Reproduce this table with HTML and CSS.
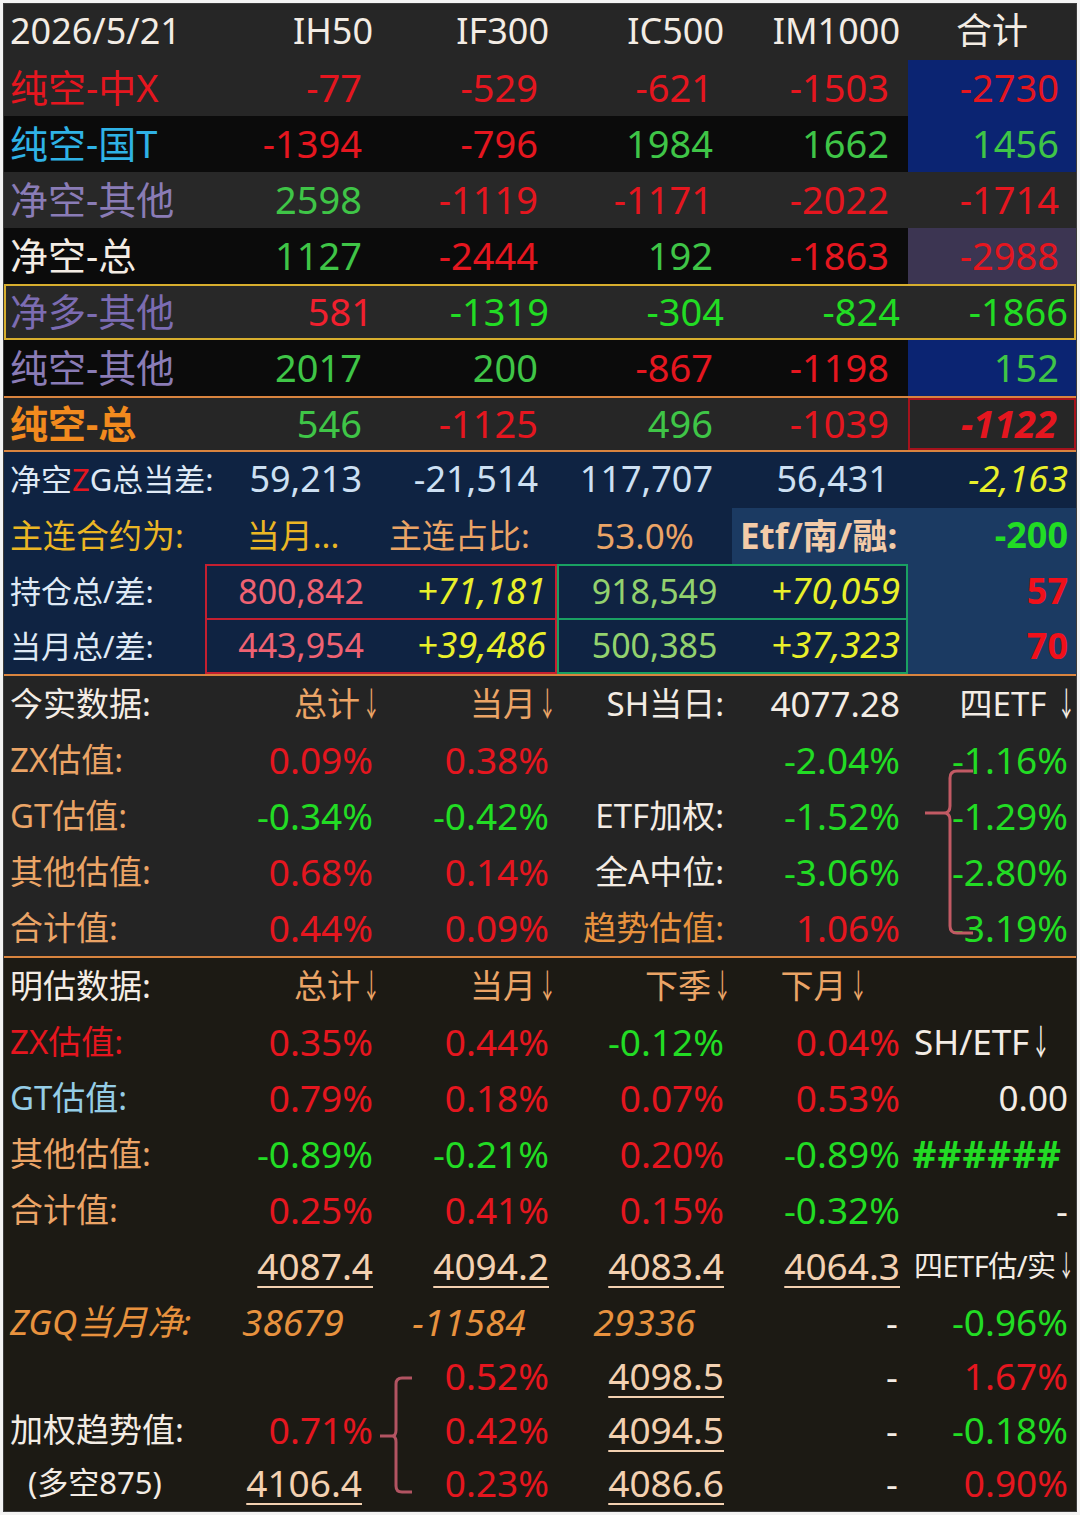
FILE: index.html
```html
<!DOCTYPE html>
<html lang="zh-CN">
<head>
<meta charset="utf-8">
<title>期货持仓数据</title>
<link rel="stylesheet" href="styles.css">
</head>
<body>
<div class="frame">
  <section class="s1">
    <div class="row hdr bg-g">
      <div class="c lab wh">2026/5/21</div>
      <div class="c hd wh">IH50</div>
      <div class="c hd wh">IF300</div>
      <div class="c hd wh">IC500</div>
      <div class="c hd wh">IM1000</div>
      <div class="c ctr wh">合计</div>
    </div>
    <div class="row bg-g">
      <div class="c lab red">纯空-中X</div>
      <div class="c n red">-77</div>
      <div class="c n red">-529</div>
      <div class="c n red">-621</div>
      <div class="c n red">-1503</div>
      <div class="c n tot bg-blue red">-2730</div>
    </div>
    <div class="row bg-k">
      <div class="c lab cyan">纯空-国T</div>
      <div class="c n red">-1394</div>
      <div class="c n red">-796</div>
      <div class="c n grn">1984</div>
      <div class="c n grn">1662</div>
      <div class="c n tot bg-blue grn">1456</div>
    </div>
    <div class="row bg-g2">
      <div class="c lab pur">净空-其他</div>
      <div class="c n grn">2598</div>
      <div class="c n red">-1119</div>
      <div class="c n red">-1171</div>
      <div class="c n red">-2022</div>
      <div class="c n tot red">-1714</div>
    </div>
    <div class="row bg-k">
      <div class="c lab wh">净空-总</div>
      <div class="c n grn">1127</div>
      <div class="c n red">-2444</div>
      <div class="c n grn">192</div>
      <div class="c n red">-1863</div>
      <div class="c n tot bg-violet red">-2988</div>
    </div>
    <div class="row bg-g2 ybox">
      <div class="c lab pur2">净多-其他</div>
      <div class="c red2">581</div>
      <div class="c bgrn">-1319</div>
      <div class="c bgrn">-304</div>
      <div class="c bgrn">-824</div>
      <div class="c bgrn">-1866</div>
    </div>
    <div class="row bg-k">
      <div class="c lab pur">纯空-其他</div>
      <div class="c n grn">2017</div>
      <div class="c n grn">200</div>
      <div class="c n red">-867</div>
      <div class="c n red">-1198</div>
      <div class="c n tot bg-blue grn">152</div>
    </div>
    <div class="row bg-g obox">
      <div class="c lab org bold">纯空-总</div>
      <div class="c n grn">546</div>
      <div class="c n red">-1125</div>
      <div class="c n grn">496</div>
      <div class="c n red">-1039</div>
      <div class="c n tot rbox red bold it">-1122</div>
    </div>
  </section>

  <section class="s2">
    <div class="row">
      <div class="c lab lt nl">净空<span class="red">Z</span>G总当差:</div>
      <div class="c n lb">59,213</div>
      <div class="c n lb">-21,514</div>
      <div class="c n lb">117,707</div>
      <div class="c n lb">56,431</div>
      <div class="c yel it">-2,163</div>
    </div>
    <div class="row">
      <div class="c lab gold cj">主连合约为:</div>
      <div class="c ctr gold cj">当月...</div>
      <div class="c left tan cj">主连占比:</div>
      <div class="c ctr tan pct">53.0%</div>
      <div class="c left peach bold bg-nl etf">Etf/南/融:</div>
      <div class="c bgrn bold bg-nl">-200</div>
    </div>
    <div class="row">
      <div class="c lab lt nl">持仓总/差:</div>
      <div class="box bx-red">
        <div class="c pink sm">800,842</div>
        <div class="c yel it">+71,181</div>
      </div>
      <div class="box bx-grn">
        <div class="c lgrn sm">918,549</div>
        <div class="c yel it">+70,059</div>
      </div>
      <div class="c bred bold bg-nl">57</div>
    </div>
    <div class="row">
      <div class="c lab lt nl">当月总/差:</div>
      <div class="box bx-red notop">
        <div class="c pink sm">443,954</div>
        <div class="c yel it">+39,486</div>
      </div>
      <div class="box bx-grn notop">
        <div class="c lgrn sm">500,385</div>
        <div class="c yel it">+37,323</div>
      </div>
      <div class="c bred bold bg-nl">70</div>
    </div>
  </section>

  <section class="s3">
    <div class="row">
      <div class="c lab wh cj">今实数据:</div>
      <div class="c tan cj">总计<span class="ar">↓</span></div>
      <div class="c tan cj">当月<span class="ar">↓</span></div>
      <div class="c wh cj">SH当日:</div>
      <div class="c wh sm">4077.28</div>
      <div class="c wh cj">四ETF&nbsp;<span class="ar">↓</span></div>
    </div>
    <div class="row">
      <div class="c lab tan cj">ZX估值:</div>
      <div class="c red">0.09%</div>
      <div class="c red">0.38%</div>
      <div class="c"></div>
      <div class="c bgrn">-2.04%</div>
      <div class="c bgrn">-1.16%</div>
    </div>
    <div class="row">
      <div class="c lab tan cj">GT估值:</div>
      <div class="c bgrn">-0.34%</div>
      <div class="c bgrn">-0.42%</div>
      <div class="c wh cj">ETF加权:</div>
      <div class="c bgrn">-1.52%</div>
      <div class="c bgrn">-1.29%</div>
    </div>
    <div class="row">
      <div class="c lab tan cj">其他估值:</div>
      <div class="c red">0.68%</div>
      <div class="c red">0.14%</div>
      <div class="c wh cj">全A中位:</div>
      <div class="c bgrn">-3.06%</div>
      <div class="c bgrn">-2.80%</div>
    </div>
    <div class="row">
      <div class="c lab tan cj">合计值:</div>
      <div class="c red">0.44%</div>
      <div class="c red">0.09%</div>
      <div class="c org2 cj">趋势估值:</div>
      <div class="c red">1.06%</div>
      <div class="c bgrn">-3.19%</div>
    </div>
    <svg class="brace brace-a" width="60" height="180" viewBox="0 0 60 180">
      <path d="M4 47 H23 Q29 47 29 40 V12 Q29 5 36 5 H52 M23 47 Q29 47 29 54 V160 Q29 167 36 167 H52" fill="none" stroke="#c25a64" stroke-width="3"/>
    </svg>
  </section>

  <section class="s4">
    <div class="row">
      <div class="c lab wh cj">明估数据:</div>
      <div class="c tan cj">总计<span class="ar">↓</span></div>
      <div class="c tan cj">当月<span class="ar">↓</span></div>
      <div class="c tan cj">下季<span class="ar">↓</span></div>
      <div class="c ctr tan cj">下月<span class="ar">↓</span></div>
      <div class="c"></div>
    </div>
    <div class="row">
      <div class="c lab red cj">ZX估值:</div>
      <div class="c red">0.35%</div>
      <div class="c red">0.44%</div>
      <div class="c bgrn">-0.12%</div>
      <div class="c red">0.04%</div>
      <div class="c left wh shetf">SH/ETF<span class="ar">↓</span></div>
    </div>
    <div class="row">
      <div class="c lab sky cj">GT估值:</div>
      <div class="c red">0.79%</div>
      <div class="c red">0.18%</div>
      <div class="c red">0.07%</div>
      <div class="c red">0.53%</div>
      <div class="c wh sm">0.00</div>
    </div>
    <div class="row">
      <div class="c lab tan cj">其他估值:</div>
      <div class="c bgrn">-0.89%</div>
      <div class="c bgrn">-0.21%</div>
      <div class="c red">0.20%</div>
      <div class="c bgrn">-0.89%</div>
      <div class="c bgrn bold hash">######</div>
    </div>
    <div class="row">
      <div class="c lab tan cj">合计值:</div>
      <div class="c red">0.25%</div>
      <div class="c red">0.41%</div>
      <div class="c red">0.15%</div>
      <div class="c bgrn">-0.32%</div>
      <div class="c wh">-</div>
    </div>
    <div class="row">
      <div class="c lab"></div>
      <div class="c u">4087.4</div>
      <div class="c u">4094.2</div>
      <div class="c u">4083.4</div>
      <div class="c u">4064.3</div>
      <div class="c left wh small">四ETF估/实<span class="ar">↓</span></div>
    </div>
    <div class="row">
      <div class="c lab org2 it zgq">ZGQ当月净:</div>
      <div class="c ctr org2 it">38679</div>
      <div class="c ctr org2 it">-11584</div>
      <div class="c ctr org2 it">29336</div>
      <div class="c wh dash">-</div>
      <div class="c bgrn">-0.96%</div>
    </div>
    <div class="row sh">
      <div class="c lab"></div>
      <div class="c"></div>
      <div class="c red">0.52%</div>
      <div class="c u">4098.5</div>
      <div class="c wh dash">-</div>
      <div class="c red">1.67%</div>
    </div>
    <div class="row sh">
      <div class="c lab wh cj">加权趋势值:</div>
      <div class="c red">0.71%</div>
      <div class="c red">0.42%</div>
      <div class="c u">4094.5</div>
      <div class="c wh dash">-</div>
      <div class="c bgrn">-0.18%</div>
    </div>
    <div class="row sh">
      <div class="c lab wh ind">(多空875)</div>
      <div class="c u wide">4106.4</div>
      <div class="c red">0.23%</div>
      <div class="c u">4086.6</div>
      <div class="c wh dash">-</div>
      <div class="c red">0.90%</div>
    </div>
    <svg class="brace brace-b" width="40" height="130" viewBox="0 0 40 130">
      <path d="M2 62 H14 Q18 62 18 56 V10 Q18 4 24 4 H34 M14 62 Q18 62 18 68 V112 Q18 118 24 118 H34" fill="none" stroke="#b25462" stroke-width="3"/>
    </svg>
  </section>
</div>
</body>
</html>
```

FILE: styles.css
```css
* { box-sizing: border-box; }

body {
  margin: 0;
  background: #f3f3f3;
  font-family: "Noto Sans", "Noto Sans CJK SC", sans-serif;
}

.frame {
  margin: 3px;
  width: 1074px;
  border: 1px solid #3c3c3c;
  background: #1c1a14;
}

.row {
  display: grid;
  grid-template-columns: 201px 176px 176px 175px 176px 168px;
  height: 56px;
  font-size: 38px;
}
.row.hdr { font-size: 36px; }

.c {
  display: flex;
  align-items: center;
  justify-content: flex-end;
  padding-right: 8px;
  padding-bottom: 2px;
  white-space: nowrap;
  line-height: 1;
}

.lab { justify-content: flex-start; padding-left: 6px; padding-right: 0; }
.ctr { justify-content: center; padding-right: 0; }
.left { justify-content: flex-start; padding-left: 8px; padding-right: 0; }
.hd { padding-right: 8px; }
.n { padding-right: 19px; }
.n.tot { padding-right: 17px; }

.bold { font-weight: 700; }
.it { font-style: italic; }

/* colours */
.wh { color: #f3ece4; }
.red { color: #e5161f; }
.red2 { color: #f0202e; }
.bred { color: #f0101a; }
.grn { color: #3fc547; }
.bgrn { color: #22dc24; }
.cyan { color: #2fb2e6; }
.pur { color: #8a7cb6; }
.pur2 { color: #7c6cb2; }
.org { color: #f28a1e; }
.org2 { color: #e8923e; }
.tan { color: #eba466; }
.gold { color: #ebb624; }
.peach { color: #f3cba8; }
.lt { color: #dfe9f5; }
.lb { color: #cde0f3; }
.yel { color: #e9f02a; }
.pink { color: #f06272; }
.lgrn { color: #93d26e; }
.sky { color: #95cde6; }

/* section 1 */
.s1 { background: #262626; }
.bg-g { background: #262626; }
.bg-g2 { background: #282828; }
.bg-k { background: #0b0b0b; }
.bg-blue { background: #0b2472; }
.bg-violet { background: #3c3552; }

.ybox { box-shadow: inset 0 0 0 2px #d7ae2e; }
.ybox .c { padding-right: 8px; }
.ybox .lab { padding-left: 6px; }

.obox {
  border-top: 2px solid #d9843f;
  border-bottom: 2px solid #d9843f;
}
.rbox { border: 2px solid #a5121c; }

/* section 2 */
.s2 { background: #0f2342; }
.s2 .row { font-size: 36px; }
.s2 .nl { font-size: 31px; }
.s2 .sm { font-size: 34px; }
.s2 .pct { font-size: 35px; }
.s2 .etf { font-size: 35px; }
.bg-nl { background: #1b3a62; }
.box {
  grid-column: span 2;
  display: grid;
  grid-template-columns: 1fr 1fr;
  border: 2px solid #c41f30;
}
.box.bx-grn { border-color: #1aa062; }
.box.notop { border-top: none; }
.bx-red .c:first-child { padding-right: 17px; }
.bx-red .c:last-child { padding-right: 9px; }
.bx-grn .c:first-child { padding-right: 15px; }
.bx-grn .c:last-child { padding-right: 6px; }
.s2 .row:last-child { border-bottom: 2px solid #d9843f; }

.cj { font-size: 33px; }
.s3 .row, .s4 .row { font-size: 37px; }
.s3 .sm, .s4 .sm { font-size: 35px; }

/* section 3 */
.s3 {
  position: relative;
  background: #242424;
  border-bottom: 2px solid #d9843f;
}

/* section 4 */
.s4 {
  position: relative;
  background: #1c1a14;
}
.s4 .row.sh { height: 53.5px; }

.u {
  color: #f3d1b1;
  text-decoration: underline;
  text-decoration-thickness: 2px;
  text-underline-offset: 6px;
}
.u.wide { padding-right: 19px; }
.dash { padding-right: 10px; }
.ind { padding-left: 24px; font-size: 31px; }
.zgq { font-size: 35px; }
.shetf { font-size: 35px; padding-left: 6px; }
.small { font-size: 29px; padding-left: 6px; letter-spacing: -0.5px; }
.hash { padding-right: 14px; letter-spacing: 1px; }

.ar {
  display: inline-block;
  width: 14px;
  text-align: center;
  transform: scaleX(0.55);
  margin-left: -1px;
  letter-spacing: 0;
}

.brace { position: absolute; }
.brace-a { left: 917px; top: 90px; }
.brace-b { left: 374px; top: 416px; }
```
